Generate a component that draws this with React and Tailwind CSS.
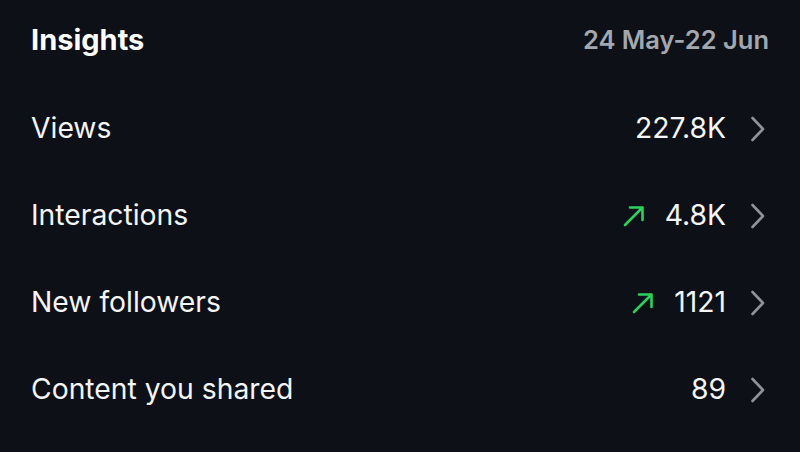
import React from "react";

const Chevron = () => (
  <svg width="16" height="26" viewBox="0 0 16 26" fill="none" className="shrink-0">
    <path d="M2.5 2 L13 13 L2.5 24" stroke="#8e9299" strokeWidth="2.6" strokeLinecap="round" strokeLinejoin="round" />
  </svg>
);

const Up = () => (
  <svg width="22" height="22" viewBox="0 0 22 22" fill="none" className="shrink-0">
    <path d="M2 20 L19.5 2.5 M7 2.5 H19.5 V15" stroke="#2ecf5d" strokeWidth="2.6" strokeLinecap="round" strokeLinejoin="round" />
  </svg>
);

const rows = [
  { label: "Views", value: "227.8K", up: false },
  { label: "Interactions", value: "4.8K", up: true },
  { label: "New followers", value: "1121", up: true },
  { label: "Content you shared", value: "89", up: false },
];

export default function App() {
  return (
    <div
      className="w-[800px] h-[452px] bg-[#0d1016] text-white overflow-hidden pl-[31px] pr-[34px]"
      style={{ fontFamily: "Inter, 'Noto Sans', sans-serif" }}
    >
      <div className="h-[80px] flex items-center justify-between">
        <span className="text-[29px] font-bold">Insights</span>
        <span className="text-[25.5px] font-semibold text-[#a3a7ae] mr-[-3px]">24 May-22 Jun</span>
      </div>
      <div className="pt-[5px]">
        {rows.map((r) => (
          <div key={r.label} className="h-[87px] flex items-center justify-between">
            <span className="text-[28.3px] font-normal text-[#f4f5f7]">{r.label}</span>
            <div className="flex items-center">
              {r.up && (
                <span className="mr-[20px] flex items-center">
                  <Up />
                </span>
              )}
              <span className="text-[28.3px] text-[#f4f5f7] mr-[24px]">{r.value}</span>
              <Chevron />
            </div>
          </div>
        ))}
      </div>
    </div>
  );
}
